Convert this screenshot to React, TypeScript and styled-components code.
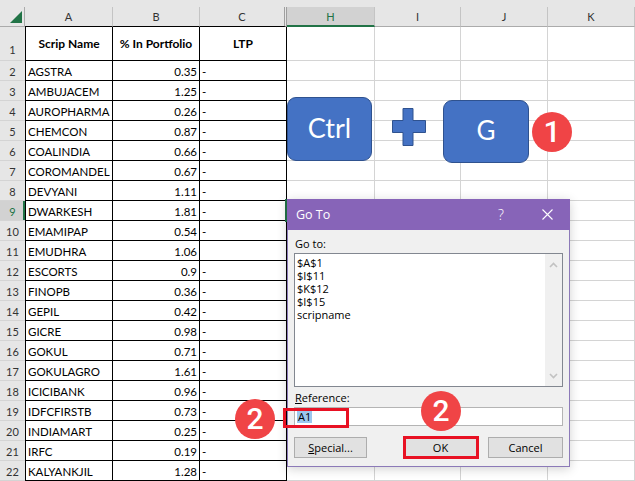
import styled, { createGlobalStyle } from 'styled-components';

const GlobalStyle = createGlobalStyle`
  html, body {
    margin: 0;
    padding: 0;
    background: #fff;
  }
  body {
    overflow: hidden;
  }
`;

const green = '#217346';
const keyBlue = '#4472c4';
const keyEdge = '#2f528f';
const badgeRed = '#f04446';
const frameRed = '#e81123';

const Page = styled.div`
  position: relative;
  width: 635px;
  height: 481px;
  overflow: hidden;
  background: #fff;
  font-family: Lato, 'Liberation Sans', sans-serif;
`;

const TopEdge = styled.div`
  height: 7px;
  background: #e6e6e6;
`;

const Sheet = styled.div`
  display: grid;
  grid-template-columns: 25px 88px 87px 87px 88px 86px 87px 87px;
  grid-template-rows: 20px 34px repeat(21, 20px);
`;

const Corner = styled.div`
  box-sizing: border-box;
  background: #e6e6e6;
  border-right: 1px solid #ababab;
  border-bottom: 1px solid #ababab;
  display: flex;
  align-items: flex-end;
  justify-content: flex-end;
  padding: 0 2px 3px 0;
`;

const ColHead = styled.div<{ $active?: boolean; $dark?: boolean; $gap?: boolean }>`
  box-sizing: border-box;
  background: ${(p) => (p.$active ? '#d2d2d2' : '#e6e6e6')};
  color: ${(p) => (p.$active ? green : '#333')};
  border-right: ${(p) => (p.$gap ? '3px double #9f9f9f' : '1px solid #c4c4c4')};
  border-bottom: ${(p) =>
    p.$active ? `2px solid ${green}` : p.$dark ? '1px solid #000' : '1px solid #ababab'};
  display: flex;
  align-items: center;
  justify-content: center;
  font-size: 11px;
`;

const RowHead = styled.div<{ $active?: boolean; $tall?: boolean }>`
  box-sizing: border-box;
  background: ${(p) => (p.$active ? '#d2d2d2' : '#e6e6e6')};
  color: ${(p) => (p.$active ? green : '#333')};
  border-bottom: 1px solid #d4d4d4;
  box-shadow: ${(p) => (p.$active ? `inset -2px 0 ${green}` : 'none')};
  display: flex;
  justify-content: center;
  align-items: flex-end;
  line-height: 16px;
  padding-bottom: ${(p) => (p.$tall ? '2px' : '0')};
  font-size: 11px;
`;

const Cell = styled.div<{
  $table?: boolean;
  $first?: boolean;
  $align?: 'left' | 'right' | 'center';
  $bold?: boolean;
}>`
  box-sizing: border-box;
  border-right: 1px solid ${(p) => (p.$table ? '#000' : '#d4d4d4')};
  border-bottom: 1px solid ${(p) => (p.$table ? '#000' : '#d4d4d4')};
  border-left: ${(p) => (p.$first ? '1px solid #000' : 'none')};
  display: flex;
  align-items: ${(p) => (p.$bold ? 'center' : 'flex-end')};
  justify-content: ${(p) =>
    p.$align === 'right' ? 'flex-end' : p.$align === 'center' ? 'center' : 'flex-start'};
  padding: 0 2px;
  line-height: 16px;
  font-size: ${(p) => (p.$bold ? 12 : 11.5)}px;
  font-weight: ${(p) => (p.$bold ? 700 : 400)};
  color: #000;
  white-space: nowrap;
  overflow: hidden;
`;

const Selection = styled.div`
  position: absolute;
  left: 285px;
  top: 199px;
  width: 90px;
  height: 23px;
  box-sizing: border-box;
  border: 2px solid ${green};
`;

const Key = styled.div<{ $x: number; $y: number; $w: number; $h: number; $size: number }>`
  position: absolute;
  left: ${(p) => p.$x}px;
  top: ${(p) => p.$y}px;
  width: ${(p) => p.$w}px;
  height: ${(p) => p.$h}px;
  box-sizing: border-box;
  background: ${keyBlue};
  border: 1px solid ${keyEdge};
  border-radius: 9px;
  color: #fff;
  display: flex;
  align-items: center;
  justify-content: center;
  font-family: Lato, 'Liberation Sans', sans-serif;
  font-size: ${(p) => p.$size}px;
  padding-bottom: 3px;
`;

const PlusMark = styled.svg`
  position: absolute;
  left: 392px;
  top: 108px;
`;

const Badge = styled.div<{ $x: number; $y: number }>`
  position: absolute;
  left: ${(p) => p.$x}px;
  top: ${(p) => p.$y}px;
  width: 40px;
  height: 40px;
  border-radius: 50%;
  background: ${badgeRed};
  color: #fff;
  display: flex;
  align-items: center;
  justify-content: center;
  font-family: Roboto, 'Open Sans', sans-serif;
  font-weight: 500;
  font-size: 30px;
  line-height: 1;
`;

const Frame = styled.div<{ $x: number; $y: number; $w: number; $h: number }>`
  position: absolute;
  left: ${(p) => p.$x}px;
  top: ${(p) => p.$y}px;
  width: ${(p) => p.$w}px;
  height: ${(p) => p.$h}px;
  box-sizing: border-box;
  border: 3px solid ${frameRed};
`;

const Dialog = styled.div`
  position: absolute;
  left: 287px;
  top: 199px;
  width: 283px;
  height: 268px;
  box-sizing: border-box;
  border: 1px solid #8c7ab8;
  border-top: none;
  background: #f0f0f0;
  display: flex;
  flex-direction: column;
  font-family: 'Open Sans', 'Noto Sans', sans-serif;
  font-size: 11px;
  color: #000;
  box-shadow: 0 2px 10px rgba(0, 0, 0, 0.18);
`;

const TitleBar = styled.div`
  height: 31px;
  margin: 0 -1px;
  background: #8764b8;
  color: #fff;
  display: flex;
  align-items: center;
  padding-left: 9px;
  font-size: 12.5px;
`;

const Title = styled.span`
  flex: 1;
`;

const TitleButton = styled.div`
  width: 46px;
  height: 31px;
  display: flex;
  align-items: center;
  justify-content: center;
  font-size: 14px;
  font-weight: 300;
`;

const Body = styled.div`
  flex: 1;
  display: flex;
  flex-direction: column;
  padding: 6px 6px 0 6px;
`;

const Label = styled.div<{ $gap?: number }>`
  line-height: 15px;
  margin-top: ${(p) => p.$gap ?? 0}px;
  margin-left: 1px;
`;

const ListBox = styled.div`
  margin-top: 2px;
  height: 134px;
  box-sizing: border-box;
  border: 1px solid #828790;
  background: #fff;
  display: flex;
`;

const ListItems = styled.div`
  flex: 1;
  padding: 2px 0 0 2px;
`;

const ListItem = styled.div`
  height: 13px;
  line-height: 13px;
`;

const ScrollBar = styled.div`
  width: 17px;
  background: #f0f0f0;
  display: flex;
  flex-direction: column;
  justify-content: space-between;
  align-items: center;
  padding: 8px 0 7px;
`;

const Input = styled.div`
  margin-top: 2px;
  height: 19px;
  box-sizing: border-box;
  border: 1px solid #b4b4b4;
  background: #fff;
  display: flex;
  align-items: center;
  padding-left: 2px;
`;

const Selected = styled.span`
  background: #9cc7ee;
  line-height: 13px;
  padding: 0 1px;
`;

const ButtonRow = styled.div`
  margin-top: 11px;
  display: flex;
  gap: 11px;
`;

const Button = styled.div<{ $w: number; $push?: boolean }>`
  width: ${(p) => p.$w}px;
  height: 21px;
  box-sizing: border-box;
  margin-left: ${(p) => (p.$push ? 'auto' : '0')};
  background: #e1e1e1;
  border: 1px solid #adadad;
  display: flex;
  align-items: center;
  justify-content: center;
`;

const cols = ['H', 'I', 'J', 'K'];

const data: [string, string, string][] = [
  ['AGSTRA', '0.35', '-'],
  ['AMBUJACEM', '1.25', '-'],
  ['AUROPHARMA', '0.26', '-'],
  ['CHEMCON', '0.87', '-'],
  ['COALINDIA', '0.66', '-'],
  ['COROMANDEL', '0.67', '-'],
  ['DEVYANI', '1.11', '-'],
  ['DWARKESH', '1.81', '-'],
  ['EMAMIPAP', '0.54', '-'],
  ['EMUDHRA', '1.06', ''],
  ['ESCORTS', '0.9', '-'],
  ['FINOPB', '0.36', '-'],
  ['GEPIL', '0.42', '-'],
  ['GICRE', '0.98', '-'],
  ['GOKUL', '0.71', '-'],
  ['GOKULAGRO', '1.61', '-'],
  ['ICICIBANK', '0.96', '-'],
  ['IDFCFIRSTB', '0.73', '-'],
  ['INDIAMART', '0.25', '-'],
  ['IRFC', '0.19', '-'],
  ['KALYANKJIL', '1.28', '-'],
];

const names = ['$A$1', '$I$11', '$K$12', '$I$15', 'scripname'];

function Chevron({ up }: { up?: boolean }) {
  return (
    <svg width="9" height="6" viewBox="0 0 9 6">
      <path
        d={up ? 'M1 5 L4.5 1.5 L8 5' : 'M1 1 L4.5 4.5 L8 1'}
        fill="none"
        stroke="#c2c2c2"
        strokeWidth="1.6"
      />
    </svg>
  );
}

export default function App() {
  return (
    <Page>
      <GlobalStyle />
      <TopEdge />
      <Sheet>
        <Corner>
          <svg width="12" height="12" viewBox="0 0 12 12">
            <polygon points="12,0 12,12 0,12" fill={green} />
          </svg>
        </Corner>
        <ColHead $dark>A</ColHead>
        <ColHead $dark>B</ColHead>
        <ColHead $dark $gap>
          C
        </ColHead>
        {cols.map((c) => (
          <ColHead key={c} $active={c === 'H'}>
            {c}
          </ColHead>
        ))}

        <RowHead $tall>1</RowHead>
        <Cell $table $first $bold $align="center">
          Scrip Name
        </Cell>
        <Cell $table $bold $align="center">
          % In Portfolio
        </Cell>
        <Cell $table $bold $align="center">
          LTP
        </Cell>
        {cols.map((c) => (
          <Cell key={c} />
        ))}

        {data.map(([name, pct, ltp], i) => (
          <>
            <RowHead key={`h${i}`} $active={i + 2 === 9}>
              {i + 2}
            </RowHead>
            <Cell key={`a${i}`} $table $first>
              {name}
            </Cell>
            <Cell key={`b${i}`} $table $align="right">
              {pct}
            </Cell>
            <Cell key={`c${i}`} $table>
              {ltp}
            </Cell>
            {cols.map((c) => (
              <Cell key={`${c}${i}`} />
            ))}
          </>
        ))}
      </Sheet>

      <Key $x={287} $y={97} $w={85} $h={64} $size={27}>
        Ctrl
      </Key>
      <PlusMark width="35" height="39" viewBox="0 0 35 39">
        <polygon
          points="11,0.5 21,0.5 21,12.5 33.5,12.5 33.5,24.5 21,24.5 21,37.5 11,37.5 11,24.5 0.5,24.5 0.5,12.5 11,12.5"
          fill={keyBlue}
          stroke={keyEdge}
          strokeWidth="1"
        />
      </PlusMark>
      <Key $x={443} $y={100} $w={86} $h={63} $size={26}>
        G
      </Key>
      <Badge $x={532} $y={112}>1</Badge>

      <Selection />

      <Dialog>
        <TitleBar>
          <Title>Go To</Title>
          <TitleButton>?</TitleButton>
          <TitleButton>
            <svg width="11" height="11" viewBox="0 0 11 11">
              <path d="M0.5 0.5 L10.5 10.5 M10.5 0.5 L0.5 10.5" stroke="#fff" strokeWidth="1.1" />
            </svg>
          </TitleButton>
        </TitleBar>
        <Body>
          <Label>Go to:</Label>
          <ListBox>
            <ListItems>
              {names.map((n) => (
                <ListItem key={n}>{n}</ListItem>
              ))}
            </ListItems>
            <ScrollBar>
              <Chevron up />
              <Chevron />
            </ScrollBar>
          </ListBox>
          <Label $gap={3}>
            <u>R</u>eference:
          </Label>
          <Input>
            <Selected>A1</Selected>
          </Input>
          <ButtonRow>
            <Button $w={73}>
              <span>
                <u>S</u>pecial...
              </span>
            </Button>
            <Button $w={73} $push>
              OK
            </Button>
            <Button $w={75}>Cancel</Button>
          </ButtonRow>
        </Body>
      </Dialog>

      <Frame $x={283} $y={408} $w={66} $h={20} />
      <Frame $x={403} $y={436} $w={76} $h={23} />
      <Badge $x={235} $y={399}>2</Badge>
      <Badge $x={421} $y={391}>2</Badge>
    </Page>
  );
}
